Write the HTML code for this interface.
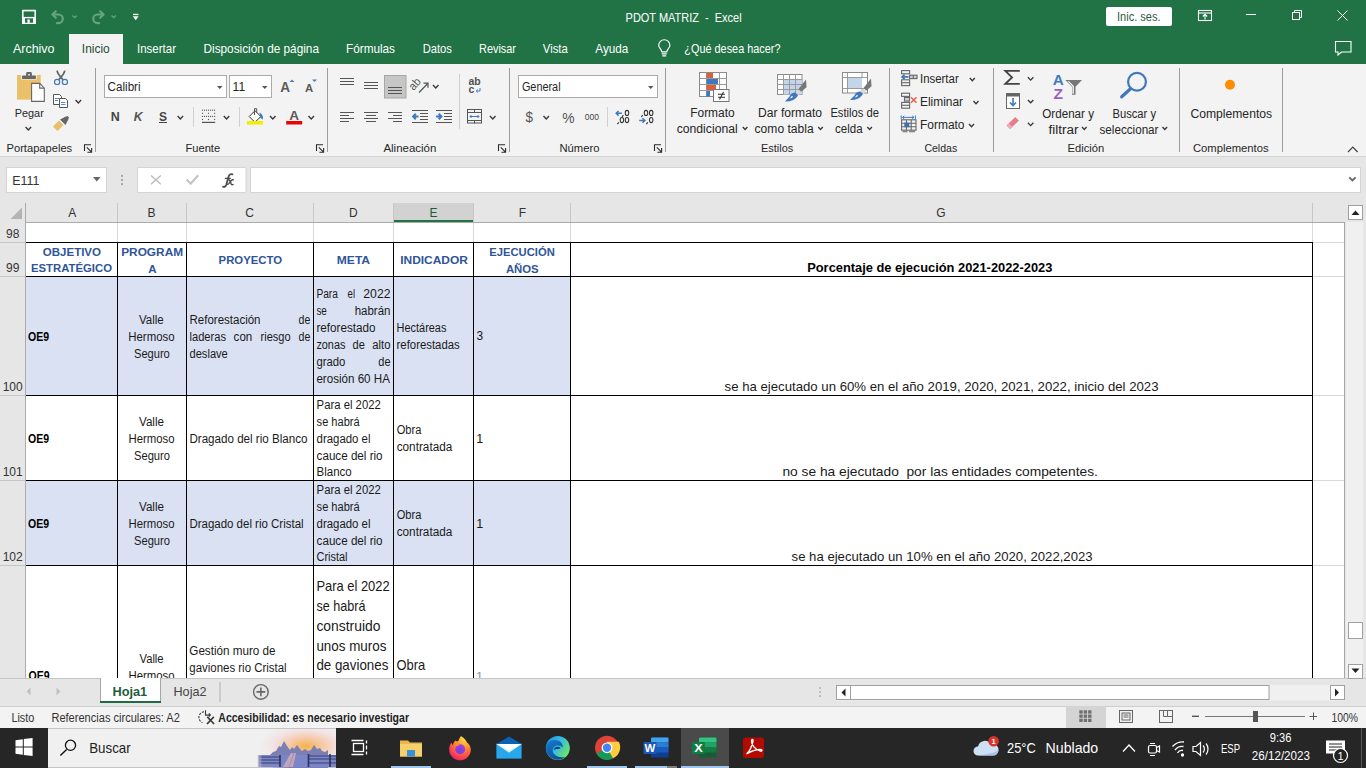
<!DOCTYPE html>
<html lang="es"><head><meta charset="utf-8"><title>PDOT MATRIZ - Excel</title>
<style>
html,body{margin:0;padding:0;width:1366px;height:768px;overflow:hidden;background:#fff;font-family:"Liberation Sans",sans-serif;}
#app{position:relative;width:1366px;height:768px;overflow:hidden;}
svg text{font-family:"Liberation Sans",sans-serif;}
</style></head><body><div id="app">
<div style="position:absolute;left:0px;top:0px;width:1366px;height:64px;background:#217346;"></div>
<div style="position:absolute;left:0px;top:64px;width:1366px;height:93px;background:#f3f3f3;"></div>
<div style="position:absolute;left:0px;top:157px;width:1366px;height:46px;background:#e6e6e6;"></div>
<div style="position:absolute;left:0px;top:203px;width:1366px;height:475px;background:#e6e6e6;"></div>
<div style="position:absolute;left:0px;top:678px;width:1366px;height:28px;background:#e6e6e6;"></div>
<div style="position:absolute;left:0px;top:706px;width:1366px;height:22px;background:#f3f3f3;"></div>
<div style="position:absolute;left:0px;top:728px;width:1366px;height:40px;background:#262626;"></div>
<svg width="1366" height="768" viewBox="0 0 1366 768" style="position:absolute;left:0;top:0">
<rect x="22" y="9.8" width="14" height="14.2" rx="0.6" fill="#fff"/><rect x="23.6" y="11.4" width="10.8" height="5.5" fill="#217346"/><rect x="25" y="18.3" width="8.1" height="4.4" fill="#217346"/><rect x="27.4" y="19.5" width="2.4" height="3.2" fill="#fff"/>
<g fill="none" stroke="#65a582" stroke-width="2.1" stroke-linecap="round" stroke-linejoin="round"><path d="M52.5 14.5h6a4.3 4.3 0 0 1 0 8.6h-1.6"/><path d="M55.8 11.2l-3.3 3.3 3.3 3.3"/><path d="M103.5 14.5h-6a4.3 4.3 0 0 0 0 8.6h1.6"/><path d="M100.2 11.2l3.3 3.3-3.3 3.3"/></g>
<g fill="none" stroke="#65a582" stroke-width="1.3"><path d="M72.5 15.5l2.2 2.2 2.2-2.2"/><path d="M111.5 15.5l2.2 2.2 2.2-2.2"/></g>
<rect x="133" y="13.8" width="5.4" height="1.3" fill="#fff"/><path d="M132.8 16.3h5.8l-2.9 3.9z" fill="#fff"/>
<text x="625.6" y="22.2" font-size="13" fill="#ffffff" text-anchor="start" textLength="116" lengthAdjust="spacingAndGlyphs" font-family="Liberation Sans" style="white-space:pre" >PDOT MATRIZ  -  Excel</text>
<rect x="1106" y="7" width="66" height="19" fill="#fff" rx="2"/>
<text x="1117" y="21.3" font-size="12.5" fill="#2f5a45" text-anchor="start" textLength="43.6" lengthAdjust="spacingAndGlyphs" font-family="Liberation Sans" style="white-space:pre" >Inic. ses.</text>
<g fill="none" stroke="#fff" stroke-width="1.1"><rect x="1198.5" y="10.5" width="13" height="10"/><path d="M1198.5 13h13"/><path d="M1205 19.5v-5M1202.8 16.5l2.2-2.2 2.2 2.2"/></g>
<rect x="1246" y="14" width="10" height="1" fill="#fff" />
<g fill="none" stroke="#fff" stroke-width="1"><rect x="1292.5" y="12.5" width="7" height="7"/><path d="M1294.5 12.5v-2h7v7h-2"/><path d="M1337.5 10.5l10 10M1347.5 10.5l-10 10"/></g>
<rect x="69" y="34" width="54" height="30" fill="#f3f3f3" />
<text x="13" y="52.9" font-size="13" fill="#ffffff" text-anchor="start" textLength="41.5" lengthAdjust="spacingAndGlyphs" font-family="Liberation Sans" style="white-space:pre" >Archivo</text>
<text x="81.8" y="52.9" font-size="13" fill="#1e4e36" text-anchor="start" textLength="28" lengthAdjust="spacingAndGlyphs" font-family="Liberation Sans" style="white-space:pre" >Inicio</text>
<text x="137" y="52.9" font-size="13" fill="#ffffff" text-anchor="start" textLength="39" lengthAdjust="spacingAndGlyphs" font-family="Liberation Sans" style="white-space:pre" >Insertar</text>
<text x="203.5" y="52.9" font-size="13" fill="#ffffff" text-anchor="start" textLength="115.5" lengthAdjust="spacingAndGlyphs" font-family="Liberation Sans" style="white-space:pre" >Disposición de página</text>
<text x="346" y="52.9" font-size="13" fill="#ffffff" text-anchor="start" textLength="49" lengthAdjust="spacingAndGlyphs" font-family="Liberation Sans" style="white-space:pre" >Fórmulas</text>
<text x="422.7" y="52.9" font-size="13" fill="#ffffff" text-anchor="start" textLength="29.2" lengthAdjust="spacingAndGlyphs" font-family="Liberation Sans" style="white-space:pre" >Datos</text>
<text x="479" y="52.9" font-size="13" fill="#ffffff" text-anchor="start" textLength="37" lengthAdjust="spacingAndGlyphs" font-family="Liberation Sans" style="white-space:pre" >Revisar</text>
<text x="542.8" y="52.9" font-size="13" fill="#ffffff" text-anchor="start" textLength="25" lengthAdjust="spacingAndGlyphs" font-family="Liberation Sans" style="white-space:pre" >Vista</text>
<text x="595.3" y="52.9" font-size="13" fill="#ffffff" text-anchor="start" textLength="33" lengthAdjust="spacingAndGlyphs" font-family="Liberation Sans" style="white-space:pre" >Ayuda</text>
<text x="684.3" y="52.9" font-size="13" fill="#ffffff" text-anchor="start" textLength="96.2" lengthAdjust="spacingAndGlyphs" font-family="Liberation Sans" style="white-space:pre" >¿Qué desea hacer?</text>
<g fill="none" stroke="#fff" stroke-width="1.15"><path d="M661.8 51.8c0-2.4-3.1-4-3.1-6.4a5.6 5.6 0 0 1 11.2 0c0 2.4-3.1 4-3.1 6.4z"/><path d="M661.8 53.9h4.9M662.3 55.9h3.9"/></g>
<g fill="none" stroke="#fff" stroke-width="1.1"><path d="M1335.5 41.5h15.5v10.5h-9.5l-3.5 3v-3h-2.5z"/></g>
<rect x="95" y="68" width="1" height="84" fill="#9c9c9c"/>
<rect x="327" y="68" width="1" height="84" fill="#9c9c9c"/>
<rect x="509" y="68" width="1" height="84" fill="#9c9c9c"/>
<rect x="665" y="68" width="1" height="84" fill="#9c9c9c"/>
<rect x="889" y="68" width="1" height="84" fill="#9c9c9c"/>
<rect x="993" y="68" width="1" height="84" fill="#9c9c9c"/>
<rect x="1179" y="68" width="1" height="84" fill="#9c9c9c"/>
<rect x="1282" y="68" width="1" height="84" fill="#9c9c9c"/>
<rect x="0" y="156" width="1366" height="1" fill="#d4d4d4"/>
<text x="6.5" y="151.5" font-size="11.5" fill="#262626" text-anchor="start" textLength="65.7" lengthAdjust="spacingAndGlyphs" font-family="Liberation Sans" style="white-space:pre" >Portapapeles</text>
<text x="185.5" y="151.5" font-size="11.5" fill="#262626" text-anchor="start" textLength="34.6" lengthAdjust="spacingAndGlyphs" font-family="Liberation Sans" style="white-space:pre" >Fuente</text>
<text x="383.4" y="151.5" font-size="11.5" fill="#262626" text-anchor="start" textLength="52.9" lengthAdjust="spacingAndGlyphs" font-family="Liberation Sans" style="white-space:pre" >Alineación</text>
<text x="559.4" y="151.5" font-size="11.5" fill="#262626" text-anchor="start" textLength="40" lengthAdjust="spacingAndGlyphs" font-family="Liberation Sans" style="white-space:pre" >Número</text>
<text x="761" y="151.5" font-size="11.5" fill="#262626" text-anchor="start" textLength="32.2" lengthAdjust="spacingAndGlyphs" font-family="Liberation Sans" style="white-space:pre" >Estilos</text>
<text x="924.4" y="151.5" font-size="11.5" fill="#262626" text-anchor="start" textLength="32.8" lengthAdjust="spacingAndGlyphs" font-family="Liberation Sans" style="white-space:pre" >Celdas</text>
<text x="1067.6" y="151.5" font-size="11.5" fill="#262626" text-anchor="start" textLength="36.6" lengthAdjust="spacingAndGlyphs" font-family="Liberation Sans" style="white-space:pre" >Edición</text>
<text x="1192.9" y="151.5" font-size="11.5" fill="#262626" text-anchor="start" textLength="75.7" lengthAdjust="spacingAndGlyphs" font-family="Liberation Sans" style="white-space:pre" >Complementos</text>
<g fill="none" stroke="#2a2a2a" stroke-width="1.1"><path d="M84.5 151.0v-6.3h6.5"/><path d="M86.8 147.3l4.8 4.8M91.6 148.1v4.2h-4.2"/></g>
<g fill="none" stroke="#2a2a2a" stroke-width="1.1"><path d="M316.5 151.0v-6.3h6.5"/><path d="M318.8 147.3l4.8 4.8M323.6 148.1v4.2h-4.2"/></g>
<g fill="none" stroke="#2a2a2a" stroke-width="1.1"><path d="M498.5 151.0v-6.3h6.5"/><path d="M500.8 147.3l4.8 4.8M505.6 148.1v4.2h-4.2"/></g>
<g fill="none" stroke="#2a2a2a" stroke-width="1.1"><path d="M654.5 151.0v-6.3h6.5"/><path d="M656.8 147.3l4.8 4.8M661.6 148.1v4.2h-4.2"/></g>
<rect x="17" y="75" width="23.7" height="24.6" fill="#ebc06a"/><path d="M21.2 74.6h15.6v5h-15.6z" fill="#f3f3f3"/><rect x="22" y="75.6" width="14" height="3.4" rx="0.8" fill="#686868"/><path d="M26.1 76v-2.6c0-.8.6-1.4 1.4-1.4h3c.8 0 1.4.6 1.4 1.4v2.6z" fill="#686868"/><rect x="28.3" y="74" width="1.5" height="1.5" fill="#fff"/>
<path d="M31.6 83.4h8.1l4.6 4.7v13.3h-12.7z" fill="#fff" stroke="#666" stroke-width="1.1"/><path d="M39.7 83.4v4.7h4.6" fill="none" stroke="#666" stroke-width="1.1"/>
<text x="14.75" y="116.5" font-size="11.5" fill="#262626" text-anchor="start" textLength="29" lengthAdjust="spacingAndGlyphs" font-family="Liberation Sans" style="white-space:pre" >Pegar</text>
<path d="M25.6 127l2.75 3 2.75 -3" fill="none" stroke="#383838" stroke-width="1.35"/>
<path d="M57 70.6c.6 3 2.6 5.6 6.2 9.2M64.8 70.6c-.6 3-2.6 5.6-6.2 9.2" fill="none" stroke="#626262" stroke-width="1.7"/>
<g fill="#eef3fa" stroke="#4a7ab4" stroke-width="1.2"><circle cx="57.1" cy="81.9" r="2.6"/><circle cx="64.9" cy="81.9" r="2.6"/></g>
<g fill="#fff" stroke="#555" stroke-width="1"><path d="M53.5 94.5h6l2 2v8h-8z"/><path d="M59.5 98.5h6l2 2v7h-8z"/></g><path d="M55 98.5h4M55 100.5h3M61 102.5h4.5M61 104.5h4.5" stroke="#4a7fbf" stroke-width="0.9"/>
<path d="M75.6 100l2.75 3 2.75 -3" fill="none" stroke="#383838" stroke-width="1.35"/>
<path d="M53 126.5l6-6 4.5 4.5-6 6z" fill="#e8bf6b"/><path d="M60 119.5l6-3 2.5 2.5-3 6z" fill="#666"/><path d="M64.5 117.5l3-1.5 1.5 1.5-1.5 3z" fill="#666"/>
<rect x="104.5" y="75.5" width="122" height="22" fill="#fff" stroke="#ababab" stroke-width="1" />
<text x="107.6" y="90.7" font-size="12" fill="#262626" text-anchor="start" textLength="33" lengthAdjust="spacingAndGlyphs" font-family="Liberation Sans" style="white-space:pre" >Calibri</text>
<path d="M217 86h5.5l-2.75 3z" fill="#555"/>
<rect x="229.5" y="75.5" width="42" height="22" fill="#fff" stroke="#ababab" stroke-width="1" />
<text x="232.6" y="90.7" font-size="12" fill="#262626" text-anchor="start" font-family="Liberation Sans" style="white-space:pre" >11</text>
<path d="M262 86h5.5l-2.75 3z" fill="#555"/>
<text x="280.3" y="92.3" font-size="14" fill="#5a5a5a" font-weight="bold" text-anchor="start" textLength="9.8" lengthAdjust="spacingAndGlyphs" font-family="Liberation Sans" style="white-space:pre" >A</text>
<path d="M289.5 82l2.5-2.5 2.5 2.5z" fill="#4a7fbf"/>
<text x="305" y="92.3" font-size="11.5" fill="#5a5a5a" font-weight="bold" text-anchor="start" textLength="8.2" lengthAdjust="spacingAndGlyphs" font-family="Liberation Sans" style="white-space:pre" >A</text>
<path d="M312 79.5h5l-2.5 2.5z" fill="#4a7fbf"/>
<text x="110.8" y="121.2" font-size="12.5" fill="#444" font-weight="bold" text-anchor="start" textLength="9" lengthAdjust="spacingAndGlyphs" font-family="Liberation Sans" style="white-space:pre" >N</text>
<text x="133.7" y="121.2" font-size="12.5" fill="#555" font-weight="bold" text-anchor="start" textLength="8.8" lengthAdjust="spacingAndGlyphs" font-family="Liberation Sans" style="white-space:pre" font-style="italic">K</text>
<text x="159" y="121.2" font-size="12.5" fill="#444" font-weight="bold" text-anchor="start" textLength="8" lengthAdjust="spacingAndGlyphs" font-family="Liberation Sans" style="white-space:pre" >S</text>
<rect x="159" y="122" width="8" height="1" fill="#444"/>
<path d="M177.6 116l2.75 3 2.75 -3" fill="none" stroke="#383838" stroke-width="1.35"/>
<rect x="193" y="107" width="1" height="20" fill="#d0d0d0"/>
<rect x="201.95" y="109.65" width="1.1" height="1.1" fill="#555"/><rect x="203.97" y="109.65" width="1.1" height="1.1" fill="#555"/><rect x="205.99" y="109.65" width="1.1" height="1.1" fill="#555"/><rect x="208.01" y="109.65" width="1.1" height="1.1" fill="#555"/><rect x="210.03" y="109.65" width="1.1" height="1.1" fill="#555"/><rect x="212.05" y="109.65" width="1.1" height="1.1" fill="#555"/><rect x="214.07" y="109.65" width="1.1" height="1.1" fill="#555"/><rect x="201.95" y="115.85" width="1.1" height="1.1" fill="#555"/><rect x="203.97" y="115.85" width="1.1" height="1.1" fill="#555"/><rect x="205.99" y="115.85" width="1.1" height="1.1" fill="#555"/><rect x="208.01" y="115.85" width="1.1" height="1.1" fill="#555"/><rect x="210.03" y="115.85" width="1.1" height="1.1" fill="#555"/><rect x="212.05" y="115.85" width="1.1" height="1.1" fill="#555"/><rect x="214.07" y="115.85" width="1.1" height="1.1" fill="#555"/><rect x="201.95" y="112.75" width="1.1" height="1.1" fill="#555"/><rect x="207.95" y="112.75" width="1.1" height="1.1" fill="#555"/><rect x="214.05" y="112.75" width="1.1" height="1.1" fill="#555"/><rect x="201.95" y="118.95" width="1.1" height="1.1" fill="#555"/><rect x="207.95" y="118.95" width="1.1" height="1.1" fill="#555"/><rect x="214.05" y="118.95" width="1.1" height="1.1" fill="#555"/><rect x="202" y="121.8" width="13.2" height="1.2" fill="#555"/>
<path d="M223.8 116l2.75 3 2.75 -3" fill="none" stroke="#383838" stroke-width="1.35"/>
<rect x="239" y="107" width="1" height="20" fill="#d0d0d0"/>
<path d="M249.2 116.5l5.8-5.8 5.8 5.8-5.8 5.8z" fill="#fff" stroke="#333" stroke-width="1"/><path d="M254.5 115v-6.3h2.2v4" fill="none" stroke="#555" stroke-width="1"/><path d="M259.5 112.5c2.8 1.5 4 4 3.3 7l-2.5-1.5z" fill="#3f7ac0"/>
<rect x="247" y="121" width="16" height="3.6" fill="#f2ee00" />
<path d="M270 116l2.75 3 2.75 -3" fill="none" stroke="#383838" stroke-width="1.35"/>
<text x="289.2" y="120.3" font-size="13" fill="#5a5a5a" font-weight="bold" text-anchor="start" textLength="9.8" lengthAdjust="spacingAndGlyphs" font-family="Liberation Sans" style="white-space:pre" >A</text>
<rect x="286.2" y="121" width="16" height="3.5" fill="#e00" />
<path d="M308.5 116l2.75 3 2.75 -3" fill="none" stroke="#383838" stroke-width="1.35"/>
<rect x="340" y="78" width="14" height="1" fill="#555"/>
<rect x="340" y="81" width="14" height="1" fill="#555"/>
<rect x="340" y="84" width="14" height="1" fill="#555"/>
<rect x="364" y="82" width="14" height="1" fill="#555"/>
<rect x="364" y="85" width="14" height="1" fill="#555"/>
<rect x="364" y="88" width="14" height="1" fill="#555"/>
<rect x="384.5" y="75.5" width="21.5" height="22.5" fill="#c6c6c6" stroke="#a6a6a6" stroke-width="1" />
<rect x="388" y="87" width="14" height="1" fill="#555"/>
<rect x="388" y="90" width="14" height="1" fill="#555"/>
<rect x="388" y="93" width="14" height="1" fill="#555"/>
<text x="0" y="0" font-size="11.5" fill="#555" text-anchor="start" textLength="12" lengthAdjust="spacingAndGlyphs" font-family="Liberation Sans" style="white-space:pre" transform="translate(413.5 91) rotate(-48)">ab</text>
<path d="M419 92.5l8.8-9M423.5 83.2h4.5v4.5" fill="none" stroke="#555" stroke-width="1.2"/>
<path d="M433 85l2.75 3 2.75 -3" fill="none" stroke="#383838" stroke-width="1.35"/>
<rect x="459" y="74" width="1" height="55" fill="#cfcfcf"/>
<text x="468.5" y="85.2" font-size="10.5" fill="#505050" font-weight="bold" text-anchor="start" textLength="12.2" lengthAdjust="spacingAndGlyphs" font-family="Liberation Sans" style="white-space:pre" >ab</text>
<text x="468.5" y="92.7" font-size="10.5" fill="#505050" font-weight="bold" text-anchor="start" font-family="Liberation Sans" style="white-space:pre" >c</text>
<path d="M480 88v3h-3.5M477.8 89.6l-1.6 1.4 1.6 1.4" fill="none" stroke="#3f7ac0" stroke-width="1"/>
<rect x="340" y="112" width="14" height="1" fill="#555"/>
<rect x="340" y="115" width="9" height="1" fill="#555"/>
<rect x="340" y="118" width="14" height="1" fill="#555"/>
<rect x="340" y="121" width="9" height="1" fill="#555"/>
<rect x="364" y="112" width="14" height="1" fill="#555"/>
<rect x="364" y="118" width="14" height="1" fill="#555"/>
<rect x="366" y="115" width="10" height="1" fill="#555"/>
<rect x="366" y="121" width="10" height="1" fill="#555"/>
<rect x="388" y="112" width="14" height="1" fill="#555"/>
<rect x="388" y="118" width="14" height="1" fill="#555"/>
<rect x="393" y="115" width="9" height="1" fill="#555"/>
<rect x="393" y="121" width="9" height="1" fill="#555"/>
<rect x="424.5" y="113" width="2" height="0" fill="none"/>
<rect x="412" y="110" width="16" height="1" fill="#555"/>
<rect x="412" y="122" width="16" height="1" fill="#555"/>
<rect x="420" y="113" width="8" height="1" fill="#555"/>
<rect x="420" y="116" width="8" height="1" fill="#555"/>
<rect x="420" y="119" width="8" height="1" fill="#555"/>
<path d="M418.5 116.5h-4.5M415.8 113.8l-2.7 2.7 2.7 2.7" fill="none" stroke="#3f7ac0" stroke-width="2"/>
<rect x="436" y="110" width="16" height="1" fill="#555"/>
<rect x="436" y="122" width="16" height="1" fill="#555"/>
<rect x="444" y="113" width="8" height="1" fill="#555"/>
<rect x="444" y="116" width="8" height="1" fill="#555"/>
<rect x="444" y="119" width="8" height="1" fill="#555"/>
<path d="M436 116.5h4.5M438.7 113.8l2.7 2.7-2.7 2.7" fill="none" stroke="#3f7ac0" stroke-width="2"/>
<g fill="none" stroke="#555" stroke-width="1"><rect x="467.5" y="109.5" width="14" height="13.5"/><path d="M467.5 112.5h14M467.5 120.5h14M474.5 109.5v3M474.5 120.5v3"/></g><path d="M470 116.5h9M471.5 115l-1.5 1.5 1.5 1.5M477.5 115l1.5 1.5-1.5 1.5" fill="none" stroke="#3f7ac0" stroke-width="1"/>
<path d="M490 116l2.75 3 2.75 -3" fill="none" stroke="#383838" stroke-width="1.35"/>
<rect x="518.5" y="75.5" width="139" height="22" fill="#fff" stroke="#ababab" stroke-width="1" />
<text x="521.9" y="90.5" font-size="12" fill="#262626" text-anchor="start" textLength="38.7" lengthAdjust="spacingAndGlyphs" font-family="Liberation Sans" style="white-space:pre" >General</text>
<path d="M648 86h5.5l-2.75 3z" fill="#555"/>
<text x="525.6" y="122" font-size="15" fill="#555" text-anchor="start" textLength="7.5" lengthAdjust="spacingAndGlyphs" font-family="Liberation Sans" style="white-space:pre" >$</text>
<path d="M543.5 116l2.75 3 2.75 -3" fill="none" stroke="#383838" stroke-width="1.35"/>
<text x="562.3" y="122.8" font-size="15" fill="#555" text-anchor="start" textLength="12.3" lengthAdjust="spacingAndGlyphs" font-family="Liberation Sans" style="white-space:pre" >%</text>
<text x="584.75" y="119.6" font-size="8.5" fill="#444" text-anchor="start" textLength="14.3" lengthAdjust="spacingAndGlyphs" font-family="Liberation Sans" style="white-space:pre" >000</text>
<rect x="607" y="107" width="1" height="20" fill="#d0d0d0"/>
<ellipse cx="627" cy="112.9" rx="1.75" ry="2.55" fill="none" stroke="#333" stroke-width="1.05"/><path d="M623.4000000000001 115.2l-1.4 1.8" stroke="#333" stroke-width="1.1"/><ellipse cx="621.9" cy="120.1" rx="1.75" ry="2.55" fill="none" stroke="#333" stroke-width="1.05"/><ellipse cx="627" cy="120.1" rx="1.75" ry="2.55" fill="none" stroke="#333" stroke-width="1.05"/><path d="M618.8000000000001 122.4l-1.4 1.8" stroke="#333" stroke-width="1.1"/><ellipse cx="646" cy="112.9" rx="1.75" ry="2.55" fill="none" stroke="#333" stroke-width="1.05"/><ellipse cx="651.2" cy="112.9" rx="1.75" ry="2.55" fill="none" stroke="#333" stroke-width="1.05"/><path d="M642.7 115.2l-1.4 1.8" stroke="#333" stroke-width="1.1"/><ellipse cx="651.2" cy="120.1" rx="1.75" ry="2.55" fill="none" stroke="#333" stroke-width="1.05"/><path d="M647.8000000000001 122.4l-1.4 1.8" stroke="#333" stroke-width="1.1"/>
<path d="M621.9 113.3h-5.6M618.6 111l-2.4 2.3 2.4 2.3" fill="none" stroke="#3f7ac0" stroke-width="1.5"/>
<path d="M639.2 120.5h5.6M642.5 118.2l2.4 2.3-2.4 2.3" fill="none" stroke="#3f7ac0" stroke-width="1.5"/>
<rect x="699.5" y="72.5" width="27" height="24" fill="#fff" stroke="#8a8a8a" stroke-width="1"/>
<path d="M699.5 78.5h27M699.5 84.5h27M699.5 90.5h27M706.5 72.5v24M719.5 72.5v24" stroke="#9a9a9a" stroke-width="1" fill="none"/>
<rect x="706.5" y="73" width="6.5" height="5" fill="#d9603b"/><rect x="706.5" y="79" width="11.5" height="5" fill="#3f78c0"/><rect x="706.5" y="85" width="9.5" height="5" fill="#d9603b"/><rect x="706.5" y="91" width="3.5" height="5.5" fill="#3f78c0"/>
<rect x="713.5" y="89.5" width="15.5" height="12" fill="#fff" stroke="#777" stroke-width="1"/>
<path d="M718 94.3h7M718 97.3h7M723.5 92l-4 7.5" stroke="#333" stroke-width="1.1" fill="none"/>
<rect x="777.5" y="74.5" width="24.5" height="20" fill="#fff" stroke="#8a8a8a"/><rect x="783" y="79.5" width="19" height="15" fill="#c3d5ea"/>
<path d="M777.5 79.5h24.5M777.5 84.5h24.5M777.5 89.5h24.5M783.5 74.5v20M789.5 74.5v20M795.5 74.5v20" stroke="#9a9a9a" stroke-width="1" fill="none"/>
<path d="M806 79.5l-7.5 9.5 2.8 2.8 5.2-4.5z" fill="#777"/><path d="M798 89.5l-2.5 2.8 2.8 2.8 2.8-2.5z" fill="#d8d8d8"/><path d="M795.5 92.5c-3 0-5 1.5-6 4l-4.5 5c4 0.5 9-1 11.5-4l1.5-2z" fill="#3f78c0"/><path d="M792 96c-1 .5-1.5 1.5-1.8 2.5 1.2-.3 2.2-1 2.8-2z" fill="#fff"/>
<rect x="842.5" y="72.5" width="25" height="20.5" fill="#fff" stroke="#8a8a8a"/><rect x="847.5" y="77.5" width="14.5" height="11" fill="#c3d5ea"/>
<path d="M842.5 77.5h25M842.5 88.5h25M847.5 72.5v20.5M862 72.5v4.5M862 88.5v4.5" stroke="#9a9a9a" stroke-width="1" fill="none"/>
<path d="M871 78.5l-7.5 9.5 2.8 2.8 5.2-4.5z" fill="#777"/><path d="M863 88.5l-2.5 2.8 2.8 2.8 2.8-2.5z" fill="#d8d8d8"/><path d="M860.5 91.5c-3 0-5 1.5-6 4l-4.5 4.5c4 0.5 9-1 11.5-4l1.5-2z" fill="#3f78c0"/><path d="M857 95c-1 .5-1.5 1.5-1.8 2.5 1.2-.3 2.2-1 2.8-2z" fill="#fff"/>
<text x="690.2" y="117.1" font-size="12" fill="#262626" text-anchor="start" textLength="44.5" lengthAdjust="spacingAndGlyphs" font-family="Liberation Sans" style="white-space:pre" >Formato</text>
<text x="676.7" y="133.2" font-size="12" fill="#262626" text-anchor="start" textLength="61" lengthAdjust="spacingAndGlyphs" font-family="Liberation Sans" style="white-space:pre" >condicional</text>
<text x="758" y="117.1" font-size="12" fill="#262626" text-anchor="start" textLength="64" lengthAdjust="spacingAndGlyphs" font-family="Liberation Sans" style="white-space:pre" >Dar formato</text>
<text x="754.6" y="133.2" font-size="12" fill="#262626" text-anchor="start" textLength="59" lengthAdjust="spacingAndGlyphs" font-family="Liberation Sans" style="white-space:pre" >como tabla</text>
<text x="830.4" y="117.1" font-size="12" fill="#262626" text-anchor="start" textLength="48.6" lengthAdjust="spacingAndGlyphs" font-family="Liberation Sans" style="white-space:pre" >Estilos de</text>
<text x="835" y="133.2" font-size="12" fill="#262626" text-anchor="start" textLength="27.6" lengthAdjust="spacingAndGlyphs" font-family="Liberation Sans" style="white-space:pre" >celda</text>
<path d="M742.8 127l2.3 2.5 2.3 -2.5" fill="none" stroke="#383838" stroke-width="1.35"/>
<path d="M818.2 127l2.3 2.5 2.3 -2.5" fill="none" stroke="#383838" stroke-width="1.35"/>
<path d="M867.3 127l2.3 2.5 2.3 -2.5" fill="none" stroke="#383838" stroke-width="1.35"/>
<g fill="none" stroke="#666" stroke-width="1.1"><rect x="901.6" y="70.6" width="8" height="3.2"/><rect x="901.6" y="79.8" width="8" height="5.8"/><path d="M901.6 82.7h8"/><rect x="909.6" y="75.2" width="7.4" height="3.4" fill="#c9d3dc"/><path d="M913.3 75.2v3.4"/><rect x="901.6" y="93.2" width="8" height="3.2"/><rect x="901.6" y="102.4" width="8" height="5.8"/><path d="M901.6 105.3h8"/><rect x="904.5" y="97.5" width="5" height="3.6" fill="#c9d3dc"/><rect x="901.6" y="119.8" width="14.4" height="10.4"/><path d="M901.6 123.3h14.4M901.6 126.8h14.4M906.4 119.8v10.4M911.2 119.8v10.4"/><path d="M902.5 131.7h5M909 131.7h6"/></g>
<path d="M908.5 76.9h-6.5M904.6 74.6l-2.6 2.3 2.6 2.3" fill="none" stroke="#3f7ac0" stroke-width="1.6"/>
<path d="M911 97.3l5.5 5.5M916.5 97.3l-5.5 5.5" stroke="#e0614e" stroke-width="1.5"/>
<rect x="904.3" y="122.6" width="5" height="4.6" fill="#3f6fb0"/>
<path d="M902.5 117.4h11.5M904.3 115.8l-1.8 1.6 1.8 1.6M912.2 115.8l1.8 1.6-1.8 1.6M901.2 115.5v3.8M915.4 115.5v3.8" fill="none" stroke="#3f7ac0" stroke-width="1"/>
<text x="920" y="82.8" font-size="12" fill="#262626" text-anchor="start" textLength="38.7" lengthAdjust="spacingAndGlyphs" font-family="Liberation Sans" style="white-space:pre" >Insertar</text>
<path d="M969.8 78l2.5 2.8 2.5 -2.8" fill="none" stroke="#383838" stroke-width="1.35"/>
<text x="920" y="106" font-size="12" fill="#262626" text-anchor="start" textLength="43" lengthAdjust="spacingAndGlyphs" font-family="Liberation Sans" style="white-space:pre" >Eliminar</text>
<path d="M973.5 101l2.5 2.8 2.5 -2.8" fill="none" stroke="#383838" stroke-width="1.35"/>
<text x="920" y="128.8" font-size="12" fill="#262626" text-anchor="start" textLength="44.5" lengthAdjust="spacingAndGlyphs" font-family="Liberation Sans" style="white-space:pre" >Formato</text>
<path d="M969 124l2.5 2.8 2.5 -2.8" fill="none" stroke="#383838" stroke-width="1.35"/>
<path d="M1019.8 70.9h-14.4l6.6 6.5-6.6 6.5h14.4" fill="none" stroke="#444" stroke-width="1.9" stroke-linejoin="miter"/>
<path d="M1027.9 77.3l2.75 2.8 2.75 -2.8" fill="none" stroke="#383838" stroke-width="1.35"/>
<rect x="1006.5" y="93.5" width="13" height="15" fill="#fff" stroke="#666"/><rect x="1006.5" y="93.5" width="13" height="3" fill="#666"/><path d="M1013 98v7.5M1010 102.5l3 3 3-3" stroke="#3f7ac0" stroke-width="1.6" fill="none"/>
<path d="M1027.9 100l2.75 2.8 2.75 -2.8" fill="none" stroke="#383838" stroke-width="1.35"/>
<path d="M1006.5 125.5l8.8-8.5 3.6 3.6-8.8 8.5z" fill="#e57d8d"/><path d="M1006.5 125.5l2.3-2.2 3.6 3.6-2.3 2.2z" fill="#f2aab5"/>
<path d="M1027.9 122.8l2.75 2.8 2.75 -2.8" fill="none" stroke="#383838" stroke-width="1.35"/>
<text x="1052.8" y="84.7" font-size="15" fill="#3f7ac0" font-weight="bold" text-anchor="start" textLength="11" lengthAdjust="spacingAndGlyphs" font-family="Liberation Sans" style="white-space:pre" >A</text>
<text x="1053.5" y="98.6" font-size="15" fill="#9b5fc0" font-weight="bold" text-anchor="start" textLength="9.5" lengthAdjust="spacingAndGlyphs" font-family="Liberation Sans" style="white-space:pre" >Z</text>
<path d="M1065.3 80h16.7l-6.5 6.8v7.9h-3.5v-7.9z" fill="#777"/><path d="M1067.5 81.2l5 5.2v7.3h1.3v-7.6l-4.8-4.9z" fill="#fff"/>
<text x="1042.3" y="117.8" font-size="12" fill="#262626" text-anchor="start" textLength="51.7" lengthAdjust="spacingAndGlyphs" font-family="Liberation Sans" style="white-space:pre" >Ordenar y</text>
<text x="1048.6" y="133.5" font-size="12" fill="#262626" text-anchor="start" textLength="30" lengthAdjust="spacingAndGlyphs" font-family="Liberation Sans" style="white-space:pre" >filtrar</text>
<path d="M1082 127l2.3 2.5 2.3 -2.5" fill="none" stroke="#383838" stroke-width="1.35"/>
<circle cx="1137" cy="81.8" r="8.9" fill="none" stroke="#3f78c0" stroke-width="2.2"/><path d="M1130.5 88.8l-8.8 8" stroke="#3f78c0" stroke-width="3.2" stroke-linecap="round"/>
<text x="1112.5" y="117.8" font-size="12" fill="#262626" text-anchor="start" textLength="43.5" lengthAdjust="spacingAndGlyphs" font-family="Liberation Sans" style="white-space:pre" >Buscar y</text>
<text x="1099.5" y="133.5" font-size="12" fill="#262626" text-anchor="start" textLength="59" lengthAdjust="spacingAndGlyphs" font-family="Liberation Sans" style="white-space:pre" >seleccionar</text>
<path d="M1162.5 127l2.3 2.5 2.3 -2.5" fill="none" stroke="#383838" stroke-width="1.35"/>
<circle cx="1230" cy="84.8" r="5" fill="#ff8c00"/>
<text x="1190.4" y="117.8" font-size="12" fill="#262626" text-anchor="start" textLength="81.7" lengthAdjust="spacingAndGlyphs" font-family="Liberation Sans" style="white-space:pre" >Complementos</text>
<path d="M1348 152l4.8-5 4.8 5" fill="none" stroke="#444" stroke-width="1.2"/>
<rect x="6.5" y="167.5" width="100" height="25" fill="#fff" stroke="#d4d4d4" stroke-width="1" />
<text x="12.3" y="185.4" font-size="12.5" fill="#333" text-anchor="start" textLength="27.2" lengthAdjust="spacingAndGlyphs" font-family="Liberation Sans" style="white-space:pre" >E111</text>
<path d="M93 177h7.5l-3.75 4.5z" fill="#666"/>
<rect x="121" y="174.9" width="2" height="2" fill="#a6a6a6" />
<rect x="121" y="179" width="2" height="2" fill="#a6a6a6" />
<rect x="121" y="183.1" width="2" height="2" fill="#a6a6a6" />
<rect x="137.5" y="167.5" width="108.5" height="25" fill="#fff" stroke="#d4d4d4" stroke-width="1" />
<path d="M151 175.5l9.8 8.8M160.8 175.5l-9.8 8.8" stroke="#bdbdbd" stroke-width="1.4" fill="none"/>
<path d="M186.5 179.5l4.2 4.2 7.5-8.5" stroke="#c4c4c4" stroke-width="2.2" fill="none"/>
<g fill="none" stroke="#4d4d4d" stroke-linecap="round"><path d="M232.5 174.3c-1.8-.6-3.4.2-3.9 2.2l-2.4 8.6c-.5 1.6-1.6 2.1-3.2 1.6" stroke-width="1.8"/><path d="M225.3 178.4h5" stroke-width="1.2"/><path d="M228.3 179.6c1 0 1.5.6 2 2l.8 2.2c.4 1 1 1.3 2 .7M233.4 179.8c-.9-.4-1.6 0-2.4 1l-2.2 2.8c-.6.7-1.3.8-1.8.4" stroke-width="1.45"/></g>
<rect x="250.5" y="167.5" width="1110" height="25" fill="#fff" stroke="#d4d4d4" stroke-width="1" />
<path d="M1349.2 177.3l3.2 3.2 3.2-3.2" stroke="#6a6a6a" stroke-width="1.9" fill="none"/>
<rect x="26" y="223" width="1318" height="455" fill="#fff" />
<rect x="393" y="203" width="80" height="19" fill="#d2d2d2" />
<rect x="26" y="222" width="1318" height="1" fill="#ababab"/>
<rect x="117" y="203" width="1" height="19" fill="#c6c6c6"/>
<rect x="186" y="203" width="1" height="19" fill="#c6c6c6"/>
<rect x="313" y="203" width="1" height="19" fill="#c6c6c6"/>
<rect x="393" y="203" width="1" height="19" fill="#c6c6c6"/>
<rect x="473" y="203" width="1" height="19" fill="#c6c6c6"/>
<rect x="570" y="203" width="1" height="19" fill="#c6c6c6"/>
<rect x="1312" y="203" width="1" height="19" fill="#c6c6c6"/>
<rect x="394" y="220" width="79" height="2" fill="#217346" />
<path d="M10.5 219h11.5v-11.5z" fill="#b4b4b4"/>
<rect x="25" y="203" width="1" height="475" fill="#ababab"/>
<text x="72.3" y="217" font-size="12" fill="#333" text-anchor="middle" font-family="Liberation Sans" style="white-space:pre" >A</text>
<text x="151.6" y="217" font-size="12" fill="#333" text-anchor="middle" font-family="Liberation Sans" style="white-space:pre" >B</text>
<text x="249.6" y="217" font-size="12" fill="#333" text-anchor="middle" font-family="Liberation Sans" style="white-space:pre" >C</text>
<text x="353.4" y="217" font-size="12" fill="#333" text-anchor="middle" font-family="Liberation Sans" style="white-space:pre" >D</text>
<text x="433.6" y="217" font-size="12" fill="#1e5c3a" text-anchor="middle" font-family="Liberation Sans" style="white-space:pre" >E</text>
<text x="522.3" y="217" font-size="12" fill="#333" text-anchor="middle" font-family="Liberation Sans" style="white-space:pre" >F</text>
<text x="941" y="217" font-size="12" fill="#333" text-anchor="middle" font-family="Liberation Sans" style="white-space:pre" >G</text>
<rect x="26" y="277" width="544" height="118" fill="#d9e1f2" />
<rect x="26" y="481" width="544" height="84" fill="#d9e1f2" />
<rect x="117" y="223" width="1" height="19" fill="#d9d9d9"/>
<rect x="186" y="223" width="1" height="19" fill="#d9d9d9"/>
<rect x="313" y="223" width="1" height="19" fill="#d9d9d9"/>
<rect x="393" y="223" width="1" height="19" fill="#d9d9d9"/>
<rect x="473" y="223" width="1" height="19" fill="#d9d9d9"/>
<rect x="570" y="223" width="1" height="19" fill="#d9d9d9"/>
<rect x="1312" y="223" width="1" height="19" fill="#d9d9d9"/>
<rect x="1313" y="242" width="31" height="1" fill="#d9d9d9"/>
<rect x="1313" y="276" width="31" height="1" fill="#d9d9d9"/>
<rect x="1313" y="395" width="31" height="1" fill="#d9d9d9"/>
<rect x="1313" y="480" width="31" height="1" fill="#d9d9d9"/>
<rect x="1313" y="565" width="31" height="1" fill="#d9d9d9"/>
<rect x="0" y="242" width="25" height="1" fill="#c6c6c6"/>
<rect x="0" y="276" width="25" height="1" fill="#c6c6c6"/>
<rect x="0" y="395" width="25" height="1" fill="#c6c6c6"/>
<rect x="0" y="480" width="25" height="1" fill="#c6c6c6"/>
<rect x="0" y="565" width="25" height="1" fill="#c6c6c6"/>
<rect x="26" y="242" width="1287" height="1" fill="#000"/>
<rect x="26" y="276" width="1287" height="1" fill="#000"/>
<rect x="26" y="395" width="1287" height="1" fill="#000"/>
<rect x="26" y="480" width="1287" height="1" fill="#000"/>
<rect x="26" y="565" width="1287" height="1" fill="#000"/>
<rect x="117" y="242" width="1" height="436" fill="#000"/>
<rect x="186" y="242" width="1" height="436" fill="#000"/>
<rect x="313" y="242" width="1" height="436" fill="#000"/>
<rect x="393" y="242" width="1" height="436" fill="#000"/>
<rect x="473" y="242" width="1" height="436" fill="#000"/>
<rect x="570" y="242" width="1" height="436" fill="#000"/>
<rect x="1312" y="242" width="1" height="436" fill="#000"/>
<rect x="1344" y="222" width="1" height="456" fill="#a6a6a6"/>
<rect x="0" y="678" width="1366" height="1" fill="#c6c6c6"/>
<text x="12.7" y="237.5" font-size="12" fill="#333" text-anchor="middle" font-family="Liberation Sans" style="white-space:pre" >98</text>
<text x="12.7" y="271.5" font-size="12" fill="#333" text-anchor="middle" font-family="Liberation Sans" style="white-space:pre" >99</text>
<text x="12.7" y="391" font-size="12" fill="#333" text-anchor="middle" font-family="Liberation Sans" style="white-space:pre" >100</text>
<text x="12.7" y="476.3" font-size="12" fill="#333" text-anchor="middle" font-family="Liberation Sans" style="white-space:pre" >101</text>
<text x="12.7" y="560.7" font-size="12" fill="#333" text-anchor="middle" font-family="Liberation Sans" style="white-space:pre" >102</text>
<text x="42.8" y="255.7" font-size="11.5" fill="#2f5597" font-weight="bold" text-anchor="start" textLength="58.2" lengthAdjust="spacingAndGlyphs" font-family="Liberation Sans" style="white-space:pre" >OBJETIVO</text>
<text x="31" y="272.4" font-size="11.5" fill="#2f5597" font-weight="bold" text-anchor="start" textLength="81" lengthAdjust="spacingAndGlyphs" font-family="Liberation Sans" style="white-space:pre" >ESTRATÉGICO</text>
<text x="121.2" y="256.1" font-size="11.5" fill="#2f5597" font-weight="bold" text-anchor="start" textLength="61.9" lengthAdjust="spacingAndGlyphs" font-family="Liberation Sans" style="white-space:pre" >PROGRAM</text>
<text x="148.3" y="272.6" font-size="11.5" fill="#2f5597" font-weight="bold" text-anchor="start" font-family="Liberation Sans" style="white-space:pre" >A</text>
<text x="218.6" y="264" font-size="11.5" fill="#2f5597" font-weight="bold" text-anchor="start" textLength="63.4" lengthAdjust="spacingAndGlyphs" font-family="Liberation Sans" style="white-space:pre" >PROYECTO</text>
<text x="336.8" y="264" font-size="11.5" fill="#2f5597" font-weight="bold" text-anchor="start" textLength="33.3" lengthAdjust="spacingAndGlyphs" font-family="Liberation Sans" style="white-space:pre" >META</text>
<text x="400.2" y="264" font-size="11.5" fill="#2f5597" font-weight="bold" text-anchor="start" textLength="67.7" lengthAdjust="spacingAndGlyphs" font-family="Liberation Sans" style="white-space:pre" >INDICADOR</text>
<text x="489.3" y="256" font-size="11.5" fill="#2f5597" font-weight="bold" text-anchor="start" textLength="65.5" lengthAdjust="spacingAndGlyphs" font-family="Liberation Sans" style="white-space:pre" >EJECUCIÓN</text>
<text x="505.9" y="272.6" font-size="11.5" fill="#2f5597" font-weight="bold" text-anchor="start" textLength="32.8" lengthAdjust="spacingAndGlyphs" font-family="Liberation Sans" style="white-space:pre" >AÑOS</text>
<text x="807.2" y="271.8" font-size="13.5" fill="#000" font-weight="bold" text-anchor="start" textLength="245.2" lengthAdjust="spacingAndGlyphs" font-family="Liberation Sans" style="white-space:pre" >Porcentaje de ejecución 2021-2022-2023</text>
<text x="28.1" y="341.2" font-size="12" fill="#000" font-weight="bold" text-anchor="start" textLength="21.1" lengthAdjust="spacingAndGlyphs" font-family="Liberation Sans" style="white-space:pre" >OE9</text>
<text x="139" y="324.2" font-size="12.5" fill="#1a1a1a" text-anchor="start" textLength="24.7" lengthAdjust="spacingAndGlyphs" font-family="Liberation Sans" style="white-space:pre" >Valle</text>
<text x="128.3" y="341.4" font-size="12.5" fill="#1a1a1a" text-anchor="start" textLength="46.2" lengthAdjust="spacingAndGlyphs" font-family="Liberation Sans" style="white-space:pre" >Hermoso</text>
<text x="134" y="358" font-size="12.5" fill="#1a1a1a" text-anchor="start" textLength="35.8" lengthAdjust="spacingAndGlyphs" font-family="Liberation Sans" style="white-space:pre" >Seguro</text>
<text x="189.5" y="324.2" font-size="12.5" fill="#1a1a1a" text-anchor="start" textLength="71" lengthAdjust="spacingAndGlyphs" font-family="Liberation Sans" style="white-space:pre" >Reforestación</text>
<text x="298.5" y="324.2" font-size="12.5" fill="#1a1a1a" text-anchor="start" textLength="11.8" lengthAdjust="spacingAndGlyphs" font-family="Liberation Sans" style="white-space:pre" >de</text>
<text x="189.5" y="341.4" font-size="12.5" fill="#1a1a1a" text-anchor="start" textLength="36.5" lengthAdjust="spacingAndGlyphs" font-family="Liberation Sans" style="white-space:pre" >laderas</text>
<text x="233.6" y="341.4" font-size="12.5" fill="#1a1a1a" text-anchor="start" textLength="18.7" lengthAdjust="spacingAndGlyphs" font-family="Liberation Sans" style="white-space:pre" >con</text>
<text x="260.5" y="341.4" font-size="12.5" fill="#1a1a1a" text-anchor="start" textLength="30.1" lengthAdjust="spacingAndGlyphs" font-family="Liberation Sans" style="white-space:pre" >riesgo</text>
<text x="298.5" y="341.4" font-size="12.5" fill="#1a1a1a" text-anchor="start" textLength="11.8" lengthAdjust="spacingAndGlyphs" font-family="Liberation Sans" style="white-space:pre" >de</text>
<text x="189.5" y="358" font-size="12.5" fill="#1a1a1a" text-anchor="start" textLength="38.3" lengthAdjust="spacingAndGlyphs" font-family="Liberation Sans" style="white-space:pre" >deslave</text>
<text x="316.4" y="297.7" font-size="12.5" fill="#1a1a1a" text-anchor="start" textLength="21.5" lengthAdjust="spacingAndGlyphs" font-family="Liberation Sans" style="white-space:pre" >Para</text>
<text x="347.6" y="297.7" font-size="12.5" fill="#1a1a1a" text-anchor="start" textLength="7.5" lengthAdjust="spacingAndGlyphs" font-family="Liberation Sans" style="white-space:pre" >el</text>
<text x="363.3" y="297.7" font-size="12.5" fill="#1a1a1a" text-anchor="start" textLength="27.2" lengthAdjust="spacingAndGlyphs" font-family="Liberation Sans" style="white-space:pre" >2022</text>
<text x="316.4" y="314.9" font-size="12.5" fill="#1a1a1a" text-anchor="start" textLength="10.4" lengthAdjust="spacingAndGlyphs" font-family="Liberation Sans" style="white-space:pre" >se</text>
<text x="354.7" y="314.9" font-size="12.5" fill="#1a1a1a" text-anchor="start" textLength="35.8" lengthAdjust="spacingAndGlyphs" font-family="Liberation Sans" style="white-space:pre" >habrán</text>
<text x="316.4" y="331.6" font-size="12.5" fill="#1a1a1a" text-anchor="start" textLength="59.1" lengthAdjust="spacingAndGlyphs" font-family="Liberation Sans" style="white-space:pre" >reforestado</text>
<text x="316.4" y="348.8" font-size="12.5" fill="#1a1a1a" text-anchor="start" textLength="29" lengthAdjust="spacingAndGlyphs" font-family="Liberation Sans" style="white-space:pre" >zonas</text>
<text x="352.5" y="348.8" font-size="12.5" fill="#1a1a1a" text-anchor="start" textLength="12.3" lengthAdjust="spacingAndGlyphs" font-family="Liberation Sans" style="white-space:pre" >de</text>
<text x="372.3" y="348.8" font-size="12.5" fill="#1a1a1a" text-anchor="start" textLength="18.2" lengthAdjust="spacingAndGlyphs" font-family="Liberation Sans" style="white-space:pre" >alto</text>
<text x="316.4" y="366" font-size="12.5" fill="#1a1a1a" text-anchor="start" textLength="29" lengthAdjust="spacingAndGlyphs" font-family="Liberation Sans" style="white-space:pre" >grado</text>
<text x="378.3" y="366" font-size="12.5" fill="#1a1a1a" text-anchor="start" textLength="12.2" lengthAdjust="spacingAndGlyphs" font-family="Liberation Sans" style="white-space:pre" >de</text>
<text x="316.4" y="382.8" font-size="12.5" fill="#1a1a1a" text-anchor="start" textLength="73.5" lengthAdjust="spacingAndGlyphs" font-family="Liberation Sans" style="white-space:pre" >erosión 60 HA</text>
<text x="396.6" y="331.6" font-size="12.5" fill="#1a1a1a" text-anchor="start" textLength="49.8" lengthAdjust="spacingAndGlyphs" font-family="Liberation Sans" style="white-space:pre" >Hectáreas</text>
<text x="396.6" y="348.8" font-size="12.5" fill="#1a1a1a" text-anchor="start" textLength="63.1" lengthAdjust="spacingAndGlyphs" font-family="Liberation Sans" style="white-space:pre" >reforestadas</text>
<text x="476.5" y="340.2" font-size="12" fill="#1a1a1a" text-anchor="start" font-family="Liberation Sans" style="white-space:pre" >3</text>
<text x="724.6" y="390.5" font-size="13.5" fill="#1a1a1a" text-anchor="start" textLength="433.9" lengthAdjust="spacingAndGlyphs" font-family="Liberation Sans" style="white-space:pre" >se ha ejecutado un 60% en el año 2019, 2020, 2021, 2022, inicio del 2023</text>
<text x="28.1" y="442.7" font-size="12" fill="#000" font-weight="bold" text-anchor="start" textLength="21.1" lengthAdjust="spacingAndGlyphs" font-family="Liberation Sans" style="white-space:pre" >OE9</text>
<text x="139" y="425.9" font-size="12.5" fill="#1a1a1a" text-anchor="start" textLength="25" lengthAdjust="spacingAndGlyphs" font-family="Liberation Sans" style="white-space:pre" >Valle</text>
<text x="128.5" y="442.7" font-size="12.5" fill="#1a1a1a" text-anchor="start" textLength="46.1" lengthAdjust="spacingAndGlyphs" font-family="Liberation Sans" style="white-space:pre" >Hermoso</text>
<text x="134" y="459.6" font-size="12.5" fill="#1a1a1a" text-anchor="start" textLength="36" lengthAdjust="spacingAndGlyphs" font-family="Liberation Sans" style="white-space:pre" >Seguro</text>
<text x="189.4" y="442.7" font-size="12.5" fill="#1a1a1a" text-anchor="start" textLength="118.1" lengthAdjust="spacingAndGlyphs" font-family="Liberation Sans" style="white-space:pre" >Dragado del rio Blanco</text>
<text x="316.6" y="408.7" font-size="12.5" fill="#1a1a1a" text-anchor="start" textLength="64.2" lengthAdjust="spacingAndGlyphs" font-family="Liberation Sans" style="white-space:pre" >Para el 2022</text>
<text x="316.6" y="425.6" font-size="12.5" fill="#1a1a1a" text-anchor="start" textLength="43.1" lengthAdjust="spacingAndGlyphs" font-family="Liberation Sans" style="white-space:pre" >se habrá</text>
<text x="316.6" y="442.7" font-size="12.5" fill="#1a1a1a" text-anchor="start" textLength="53.9" lengthAdjust="spacingAndGlyphs" font-family="Liberation Sans" style="white-space:pre" >dragado el</text>
<text x="316.6" y="459.6" font-size="12.5" fill="#1a1a1a" text-anchor="start" textLength="66" lengthAdjust="spacingAndGlyphs" font-family="Liberation Sans" style="white-space:pre" >cauce del rio</text>
<text x="316.6" y="476.2" font-size="12.5" fill="#1a1a1a" text-anchor="start" textLength="35.1" lengthAdjust="spacingAndGlyphs" font-family="Liberation Sans" style="white-space:pre" >Blanco</text>
<text x="396.7" y="434.1" font-size="12.5" fill="#1a1a1a" text-anchor="start" textLength="24.6" lengthAdjust="spacingAndGlyphs" font-family="Liberation Sans" style="white-space:pre" >Obra</text>
<text x="396.7" y="450.9" font-size="12.5" fill="#1a1a1a" text-anchor="start" textLength="55.6" lengthAdjust="spacingAndGlyphs" font-family="Liberation Sans" style="white-space:pre" >contratada</text>
<text x="476.3" y="442.7" font-size="12.5" fill="#1a1a1a" text-anchor="start" font-family="Liberation Sans" style="white-space:pre" >1</text>
<text x="28.1" y="527.8" font-size="12" fill="#000" font-weight="bold" text-anchor="start" textLength="21.1" lengthAdjust="spacingAndGlyphs" font-family="Liberation Sans" style="white-space:pre" >OE9</text>
<text x="139" y="511.0" font-size="12.5" fill="#1a1a1a" text-anchor="start" textLength="25" lengthAdjust="spacingAndGlyphs" font-family="Liberation Sans" style="white-space:pre" >Valle</text>
<text x="128.5" y="527.8" font-size="12.5" fill="#1a1a1a" text-anchor="start" textLength="46.1" lengthAdjust="spacingAndGlyphs" font-family="Liberation Sans" style="white-space:pre" >Hermoso</text>
<text x="134" y="544.7" font-size="12.5" fill="#1a1a1a" text-anchor="start" textLength="36" lengthAdjust="spacingAndGlyphs" font-family="Liberation Sans" style="white-space:pre" >Seguro</text>
<text x="189.4" y="527.8" font-size="12.5" fill="#1a1a1a" text-anchor="start" textLength="114.2" lengthAdjust="spacingAndGlyphs" font-family="Liberation Sans" style="white-space:pre" >Dragado del rio Cristal</text>
<text x="316.6" y="493.79999999999995" font-size="12.5" fill="#1a1a1a" text-anchor="start" textLength="64.2" lengthAdjust="spacingAndGlyphs" font-family="Liberation Sans" style="white-space:pre" >Para el 2022</text>
<text x="316.6" y="510.70000000000005" font-size="12.5" fill="#1a1a1a" text-anchor="start" textLength="43.1" lengthAdjust="spacingAndGlyphs" font-family="Liberation Sans" style="white-space:pre" >se habrá</text>
<text x="316.6" y="527.8" font-size="12.5" fill="#1a1a1a" text-anchor="start" textLength="53.9" lengthAdjust="spacingAndGlyphs" font-family="Liberation Sans" style="white-space:pre" >dragado el</text>
<text x="316.6" y="544.7" font-size="12.5" fill="#1a1a1a" text-anchor="start" textLength="66" lengthAdjust="spacingAndGlyphs" font-family="Liberation Sans" style="white-space:pre" >cauce del rio</text>
<text x="316.6" y="561.3" font-size="12.5" fill="#1a1a1a" text-anchor="start" textLength="30.9" lengthAdjust="spacingAndGlyphs" font-family="Liberation Sans" style="white-space:pre" >Cristal</text>
<text x="396.7" y="519.2" font-size="12.5" fill="#1a1a1a" text-anchor="start" textLength="24.6" lengthAdjust="spacingAndGlyphs" font-family="Liberation Sans" style="white-space:pre" >Obra</text>
<text x="396.7" y="536.0" font-size="12.5" fill="#1a1a1a" text-anchor="start" textLength="55.6" lengthAdjust="spacingAndGlyphs" font-family="Liberation Sans" style="white-space:pre" >contratada</text>
<text x="476.3" y="527.8" font-size="12.5" fill="#1a1a1a" text-anchor="start" font-family="Liberation Sans" style="white-space:pre" >1</text>
<text x="782.4" y="475.8" font-size="13.5" fill="#1a1a1a" text-anchor="start" textLength="315.5" lengthAdjust="spacingAndGlyphs" font-family="Liberation Sans" style="white-space:pre" >no se ha ejecutado  por las entidades competentes.</text>
<text x="791.6" y="560.7" font-size="13.5" fill="#1a1a1a" text-anchor="start" textLength="301" lengthAdjust="spacingAndGlyphs" font-family="Liberation Sans" style="white-space:pre" >se ha ejecutado un 10% en el año 2020, 2022,2023</text>
<defs><clipPath id="gclip"><rect x="26" y="566" width="1318" height="112"/></clipPath></defs>
<g clip-path="url(#gclip)">
<text x="28.6" y="679.8" font-size="12" fill="#000" font-weight="bold" text-anchor="start" textLength="21.1" lengthAdjust="spacingAndGlyphs" font-family="Liberation Sans" style="white-space:pre" >OE9</text>
<text x="139.5" y="662.7" font-size="12.5" fill="#1a1a1a" text-anchor="start" textLength="24.1" lengthAdjust="spacingAndGlyphs" font-family="Liberation Sans" style="white-space:pre" >Valle</text>
<text x="128.5" y="679.7" font-size="12.5" fill="#1a1a1a" text-anchor="start" textLength="46.1" lengthAdjust="spacingAndGlyphs" font-family="Liberation Sans" style="white-space:pre" >Hermoso</text>
<text x="189.3" y="654.6" font-size="12.5" fill="#1a1a1a" text-anchor="start" textLength="86.3" lengthAdjust="spacingAndGlyphs" font-family="Liberation Sans" style="white-space:pre" >Gestión muro de</text>
<text x="189.3" y="671.5" font-size="12.5" fill="#1a1a1a" text-anchor="start" textLength="97.3" lengthAdjust="spacingAndGlyphs" font-family="Liberation Sans" style="white-space:pre" >gaviones rio Cristal</text>
<text x="316.4" y="590.8" font-size="14.5" fill="#1a1a1a" text-anchor="start" textLength="73.3" lengthAdjust="spacingAndGlyphs" font-family="Liberation Sans" style="white-space:pre" >Para el 2022</text>
<text x="316.4" y="610.6999999999999" font-size="14.5" fill="#1a1a1a" text-anchor="start" textLength="49" lengthAdjust="spacingAndGlyphs" font-family="Liberation Sans" style="white-space:pre" >se habrá</text>
<text x="316.4" y="630.5999999999999" font-size="14.5" fill="#1a1a1a" text-anchor="start" textLength="64" lengthAdjust="spacingAndGlyphs" font-family="Liberation Sans" style="white-space:pre" >construido</text>
<text x="316.4" y="650.5" font-size="14.5" fill="#1a1a1a" text-anchor="start" textLength="70" lengthAdjust="spacingAndGlyphs" font-family="Liberation Sans" style="white-space:pre" >unos muros</text>
<text x="316.4" y="670.4" font-size="14.5" fill="#1a1a1a" text-anchor="start" textLength="72" lengthAdjust="spacingAndGlyphs" font-family="Liberation Sans" style="white-space:pre" >de gaviones</text>
<text x="396.4" y="670.3" font-size="14.5" fill="#1a1a1a" text-anchor="start" textLength="28.8" lengthAdjust="spacingAndGlyphs" font-family="Liberation Sans" style="white-space:pre" >Obra</text>
<text x="476" y="681" font-size="12.5" fill="#8497b0" text-anchor="start" font-family="Liberation Sans" style="white-space:pre" >1</text>
</g>
<rect x="1345" y="203" width="21" height="475" fill="#e6e6e6" />
<rect x="1346" y="222" width="17" height="456" fill="#f0f0f0" />
<rect x="1348.5" y="205.5" width="14" height="14" fill="#fff" stroke="#a0a0a0" stroke-width="1" />
<path d="M1351.5 215h8l-4-4.5z" fill="#222"/>
<rect x="1348.5" y="622.5" width="14" height="16" fill="#fff" stroke="#a0a0a0" stroke-width="1" />
<rect x="1348.5" y="664.5" width="14" height="14" fill="#fff" stroke="#a0a0a0" stroke-width="1" />
<path d="M1351.5 668.5h8l-4 4.5z" fill="#222"/>
<rect x="0" y="679" width="1366" height="27" fill="#e6e6e6" />
<path d="M30.5 687.5v8l-3.8-4z" fill="#c0c0c0"/><path d="M56.5 687.5v8l3.8-4z" fill="#c0c0c0"/>
<rect x="101" y="678" width="60" height="25" fill="#fff" />
<rect x="100" y="678" width="1" height="25" fill="#a6a6a6"/>
<rect x="160" y="678" width="1" height="25" fill="#a6a6a6"/>
<rect x="100" y="701" width="61" height="2" fill="#1f6b43" />
<text x="112.5" y="695.6" font-size="13" fill="#1e5e3c" font-weight="bold" text-anchor="start" textLength="34.7" lengthAdjust="spacingAndGlyphs" font-family="Liberation Sans" style="white-space:pre" >Hoja1</text>
<text x="173.5" y="695.6" font-size="13" fill="#444" text-anchor="start" textLength="33" lengthAdjust="spacingAndGlyphs" font-family="Liberation Sans" style="white-space:pre" >Hoja2</text>
<rect x="219.5" y="682" width="1" height="20" fill="#b0b0b0"/>
<circle cx="260.9" cy="691.9" r="7.3" fill="none" stroke="#666" stroke-width="1.4"/><path d="M260.9 687.5v8.8M256.5 691.9h8.8" stroke="#666" stroke-width="1.6"/>
<rect x="819.3" y="687.2" width="1.6" height="1.6" fill="#a8a8a8" />
<rect x="819.3" y="691.2" width="1.6" height="1.6" fill="#a8a8a8" />
<rect x="819.3" y="695.3" width="1.6" height="1.6" fill="#a8a8a8" />
<rect x="836" y="685" width="509" height="15.5" fill="#f0f0f0" />
<rect x="836.5" y="685.5" width="14" height="14" fill="#fff" stroke="#a0a0a0" stroke-width="1" />
<path d="M845.5 688.5v8l-4-4z" fill="#222"/>
<rect x="850.5" y="685.5" width="418.5" height="14" fill="#fff" stroke="#a0a0a0" stroke-width="1" />
<rect x="1330.5" y="685.5" width="14" height="14" fill="#fff" stroke="#a0a0a0" stroke-width="1" />
<path d="M1335 688.5v8l4-4z" fill="#222"/>
<rect x="0" y="706" width="1366" height="1" fill="#cfcfcf"/>
<text x="11.4" y="721.5" font-size="12" fill="#333" text-anchor="start" textLength="23" lengthAdjust="spacingAndGlyphs" font-family="Liberation Sans" style="white-space:pre" >Listo</text>
<text x="51.4" y="721.5" font-size="12" fill="#333" text-anchor="start" textLength="128.5" lengthAdjust="spacingAndGlyphs" font-family="Liberation Sans" style="white-space:pre" >Referencias circulares: A2</text>
<g fill="none" stroke="#3a3a3a"><path d="M204 711.8a5.6 5.6 0 0 0-1.5 10.8" stroke-width="1.1" stroke-dasharray="2.2 1.2"/><path d="M205.5 710.3v4.8h4.8M208.8 713.5l1.6 1.6-1.6 1.6" stroke-width="1.1"/><path d="M207.3 716.8l6.8 7.2M213.8 716.8l-6.8 7.2" stroke-width="1.7"/></g>
<text x="218.3" y="721.5" font-size="12" fill="#222" font-weight="bold" text-anchor="start" textLength="190.7" lengthAdjust="spacingAndGlyphs" font-family="Liberation Sans" style="white-space:pre" >Accesibilidad: es necesario investigar</text>
<rect x="1066" y="706" width="40" height="22" fill="#d4d4d4" />
<rect x="1079.3" y="710.3" width="3.4" height="3.3" fill="#707070"/><rect x="1079.3" y="714.5" width="3.4" height="3.3" fill="#707070"/><rect x="1079.3" y="718.7" width="3.4" height="3.3" fill="#707070"/><rect x="1083.7" y="710.3" width="3.4" height="3.3" fill="#707070"/><rect x="1083.7" y="714.5" width="3.4" height="3.3" fill="#707070"/><rect x="1083.7" y="718.7" width="3.4" height="3.3" fill="#707070"/><rect x="1088.1" y="710.3" width="3.4" height="3.3" fill="#707070"/><rect x="1088.1" y="714.5" width="3.4" height="3.3" fill="#707070"/><rect x="1088.1" y="718.7" width="3.4" height="3.3" fill="#707070"/>
<g fill="none" stroke="#666" stroke-width="1"><rect x="1119.5" y="710.5" width="13" height="12"/><rect x="1122" y="713" width="8" height="7"/><path d="M1123.5 715h5M1123.5 717h5"/><rect x="1159.5" y="710.5" width="13" height="12"/><path d="M1163.5 710.5v6h4v-6M1167.5 716.5h5"/></g>
<rect x="1192" y="715.6" width="7" height="1.4" fill="#555" />
<rect x="1205" y="716" width="100" height="1" fill="#777"/>
<rect x="1253" y="711" width="5" height="11" fill="#555" />
<rect x="1309.5" y="716" width="7.5" height="1" fill="#555"/>
<rect x="1313" y="712.5" width="1" height="7.5" fill="#555"/>
<text x="1331.5" y="721.5" font-size="12" fill="#333" text-anchor="start" textLength="26.5" lengthAdjust="spacingAndGlyphs" font-family="Liberation Sans" style="white-space:pre" >100%</text>
<path d="M15.5 740.2l7.3-1v7.3h-7.3zM23.8 739.1l8.8-1.2v8.6h-8.8zM15.5 747.5h7.3v7.3l-7.3-1zM23.8 747.5h8.8v8.6l-8.8-1.2z" fill="#fff"/>
<rect x="48" y="728" width="288" height="40" fill="#f0f0f0" />
<rect x="48" y="728" width="288" height="1" fill="#c4c4c4"/>
<rect x="48" y="767" width="288" height="1" fill="#c4c4c4"/>
<circle cx="70.5" cy="745.3" r="5.1" fill="none" stroke="#111" stroke-width="1.3"/><path d="M66.6 749.4l-6.2 6.2" stroke="#111" stroke-width="1.4"/>
<text x="89.2" y="752.9" font-size="15" fill="#222" text-anchor="start" textLength="41.5" lengthAdjust="spacingAndGlyphs" font-family="Liberation Sans" style="white-space:pre" >Buscar</text>
<defs><radialGradient id="glow" cx="0.62" cy="0.45" r="0.6"><stop offset="0" stop-color="#f7b24a"/><stop offset="0.35" stop-color="#f6c9a8"/><stop offset="0.7" stop-color="#f3e3e6"/><stop offset="1" stop-color="#f0f0f0"/></radialGradient><linearGradient id="fade" x1="0" x2="1" y1="0" y2="0"><stop offset="0" stop-color="#f0f0f0"/><stop offset="0.25" stop-color="#f0f0f0" stop-opacity="0"/></linearGradient></defs>
<rect x="257" y="729" width="79" height="38" fill="url(#glow)"/>
<path d="M270 767v-12l3-3 3-1 3-5 2 1 3-6 3 5 3 4 2-3 2 2 3-4 3 4 2 2 3-2 3 2 3-1 3-5 3 4 3-1 2 3 3 1 3-2v20z" fill="#7c7fb4"/>
<path d="M257 767v-12h79v12z" fill="#7a86c6"/><path d="M283 767l8-14h5l-3 14z" fill="#c4a6bb"/><path d="M289 767l5-14" stroke="#9f8fb3" stroke-width="1"/>
<path d="M258 757h22M309 756h27M258 760h22M309 759h27M258 763h22M309 763h27" stroke="#3b3f72" stroke-width="1"/><path d="M259 755v12M280 755v12M308.5 754v13M330 754v13" stroke="#2e315f" stroke-width="1.6"/>
<rect x="257" y="729" width="20" height="38" fill="url(#fade)"/>
<g fill="none" stroke="#fff" stroke-width="1.3"><rect x="353.5" y="743.5" width="10" height="8"/><path d="M351.5 740.5h12M351.5 754.5h12M366.5 740.5v3M366.5 745.5v4M366.5 751.5v3"/></g>
<path d="M400 740.5h8l2 2h12v14h-22z" fill="#e8b64a"/><rect x="400" y="744" width="22" height="12.5" fill="#f6d06a"/><rect x="407" y="750" width="8" height="6.5" fill="#3b8fd9"/>
<rect x="391" y="766" width="40" height="2" fill="#9fc7ec" />
<defs><radialGradient id="ffo" cx="0.7" cy="0.1" r="1"><stop offset="0" stop-color="#ffe14a"/><stop offset="0.35" stop-color="#ff9a2a"/><stop offset="0.75" stop-color="#ff4a4a"/><stop offset="1" stop-color="#e8186d"/></radialGradient><radialGradient id="ffp" cx="0.4" cy="0.7" r="0.8"><stop offset="0" stop-color="#6f3fe0"/><stop offset="1" stop-color="#b23fd9"/></radialGradient></defs>
<path d="M461 736c3.5 2.3 5.5 5 5.8 6.2 2.5 1.8 4 4.5 4 7.3a10.8 10.8 0 0 1-21.6 0c0-3 .8-5.3 2.2-7 .3 1.3.8 2.1 1.3 2.6.6-2.2 1.8-3.8 2.8-4.7.9.7 1.8 1 2.7.8.9-2.2 1.8-4 2.8-5.2z" fill="url(#ffo)"/>
<circle cx="460.2" cy="749.2" r="5" fill="url(#ffp)"/><path d="M454.5 746c1.5-2 4-3 6.5-2.5-1.5.5-2.5 1.5-3 2.5z" fill="#ff8a2a"/>
<path d="M496.5 744l12.5-7.5 12.5 7.5v14.5h-25z" fill="#0a62b8"/><rect x="496.5" y="744" width="25" height="14.5" fill="#28a8ea"/><path d="M496.5 744l12.5 8.5 12.5-8.5" fill="#fff"/><path d="M496.5 744l12.5 8.5 12.5-8.5v-0.5l-12.5 7.5-12.5-7.5z" fill="#cde8fb"/>
<defs><linearGradient id="edg" x1="0" y1="0" x2="1" y2="0.6"><stop offset="0" stop-color="#1f8fd8"/><stop offset="0.5" stop-color="#33b8e8"/><stop offset="1" stop-color="#6ae56a"/></linearGradient><linearGradient id="edb" x1="0" y1="0" x2="0.6" y2="1"><stop offset="0" stop-color="#1a7bd0"/><stop offset="1" stop-color="#0b4f9a"/></linearGradient></defs>
<circle cx="557.8" cy="747.9" r="12" fill="url(#edg)"/>
<path d="M546 748a11.8 11.8 0 0 0 19.5 8.8c-3.5 1.2-9.5 0.5-12-3.5-1.8-3 -0.5-6.5 2.5-7.5 2.5-0.8 5.2 0 6.8 1.8 .5-4-3-7.5-8-7.5-5 0-8.8 3.5-8.8 7.9z" fill="url(#edb)"/>
<path d="M553.6 750.5c0-2.2 1.8-3.8 4-3.8 1.3 0 2.5.5 3.2 1.4-1 .6-2.2.9-3.5.9-1.8 0-3 .5-3.7 1.5z" fill="#0f3f80"/>
<circle cx="607" cy="747.8" r="12" fill="#db4437"/><path d="M607 747.8l-10.4 6 A12 12 0 0 0 613 758.2z" fill="#0f9d58"/><path d="M607 747.8l6 10.4A12 12 0 0 0 618.9 741.8H607z" fill="#ffcd40"/><circle cx="607" cy="747.8" r="5.4" fill="#fff"/><circle cx="607" cy="747.8" r="4.2" fill="#4285f4"/>
<rect x="587" y="766" width="40" height="2" fill="#9fc7ec" />
<g><rect x="651" y="737.5" width="17.5" height="20" rx="1.2" fill="#103f91"/><rect x="651" y="737.5" width="17.5" height="5" rx="1.2" fill="#41a5ee"/><rect x="651" y="742.5" width="17.5" height="5" fill="#2b7cd3"/><rect x="651" y="747.5" width="17.5" height="5" fill="#185abd"/></g>
<rect x="643.5" y="742" width="13" height="12" rx="1" fill="#1e57b8"/>
<text x="644.6" y="752.3" font-size="10.5" fill="#fff" font-weight="bold" text-anchor="start" textLength="10.8" lengthAdjust="spacingAndGlyphs" font-family="Liberation Sans" style="white-space:pre" >W</text>
<rect x="635" y="766" width="32" height="2" fill="#9fc7ec" />
<rect x="667" y="766" width="10" height="2" fill="#7d7d7d" />
<rect x="681" y="728" width="48" height="40" fill="#4a4a4a" />
<g><rect x="699" y="737.5" width="17.5" height="20" rx="1.2" fill="#185c37"/><rect x="699" y="737.5" width="17.5" height="5" rx="1.2" fill="#33c481"/><rect x="699" y="742.5" width="17.5" height="5" fill="#21a366"/><rect x="699" y="747.5" width="17.5" height="5" fill="#107c41"/></g>
<rect x="691.8" y="742" width="13" height="12" rx="1" fill="#107c41"/>
<text x="694.3" y="752.3" font-size="10.5" fill="#fff" font-weight="bold" text-anchor="start" textLength="8.5" lengthAdjust="spacingAndGlyphs" font-family="Liberation Sans" style="white-space:pre" >X</text>
<rect x="681" y="766" width="48" height="2" fill="#9fc7ec" />
<rect x="743" y="737.5" width="21" height="20.5" rx="2.5" fill="#b30b00"/><path d="M746.5 754c3-2 6-9 6.5-13 .3-2-1.5-2-1.5 0 0 4 4 9 9 10 2 .3 2-1.5 0-1.5-4 0-10 2-14 4.5z" fill="none" stroke="#fff" stroke-width="1.4"/>
<path d="M978 755.5a4.5 4.5 0 0 1 0-9 7 7 0 0 1 13-2 5.5 5.5 0 0 1 7.5 5.5 5.5 5.5 0 0 1-5.5 5.5z" fill="#cfe0f5"/><path d="M978 755.5h15a5.5 5.5 0 0 0 5.5-5.5c-3 3-12 4-20.5 5.5z" fill="#a9c4e6"/>
<circle cx="993.6" cy="741.3" r="5.3" fill="#d9342b"/>
<text x="993.6" y="744.3" font-size="7.5" fill="#fff" font-weight="bold" text-anchor="middle" font-family="Liberation Sans" style="white-space:pre" >1</text>
<text x="1007" y="753.2" font-size="15" fill="#fff" text-anchor="start" textLength="28.8" lengthAdjust="spacingAndGlyphs" font-family="Liberation Sans" style="white-space:pre" >25°C</text>
<text x="1045.6" y="753.2" font-size="15" fill="#fff" text-anchor="start" textLength="52.6" lengthAdjust="spacingAndGlyphs" font-family="Liberation Sans" style="white-space:pre" >Nublado</text>
<path d="M1123 751.5l6-6.5 6 6.5" fill="none" stroke="#fff" stroke-width="1.3"/>
<g fill="none" stroke="#fff" stroke-width="1.2"><rect x="1148.5" y="745.5" width="8" height="7.5" rx="1.5"/><path d="M1156.5 747.5l3-1.5v6l-3-1.5M1150 743.5h5M1150 755.5h5"/></g>
<g fill="none" stroke="#fff" stroke-width="1.3"><path d="M1172.5 746.5a14 14 0 0 1 11.5-4.5M1175 750a9 9 0 0 1 8.5-3.5M1177.5 753a5 5 0 0 1 5.5-2.5"/><circle cx="1182.5" cy="755" r="1" fill="#fff"/></g>
<g fill="none" stroke="#fff" stroke-width="1.2"><path d="M1193 746.5h3l4.5-4v13l-4.5-4h-3z"/><path d="M1203 745.5a5 5 0 0 1 0 7M1206 743.5a8.5 8.5 0 0 1 0 11"/></g>
<text x="1220.9" y="753.2" font-size="13" fill="#fff" text-anchor="start" textLength="19.1" lengthAdjust="spacingAndGlyphs" font-family="Liberation Sans" style="white-space:pre" >ESP</text>
<text x="1269.7" y="742.2" font-size="13" fill="#fff" text-anchor="start" textLength="21.7" lengthAdjust="spacingAndGlyphs" font-family="Liberation Sans" style="white-space:pre" >9:36</text>
<text x="1251.8" y="760" font-size="13" fill="#fff" text-anchor="start" textLength="58.2" lengthAdjust="spacingAndGlyphs" font-family="Liberation Sans" style="white-space:pre" >26/12/2023</text>
<path d="M1326 740.5h19v13h-6l-3.5 3.5v-3.5h-9.5z" fill="#fff"/><path d="M1329 744h13M1329 747h13M1329 750h9" stroke="#222" stroke-width="1.2"/>
<circle cx="1340.5" cy="755.5" r="7" fill="#222" stroke="#fff" stroke-width="1.2"/>
<text x="1340.5" y="759.8" font-size="11" fill="#fff" text-anchor="middle" font-family="Liberation Sans" style="white-space:pre" >1</text>
<rect x="1361" y="728" width="1" height="40" fill="#555"/>
</svg></div></body></html>
